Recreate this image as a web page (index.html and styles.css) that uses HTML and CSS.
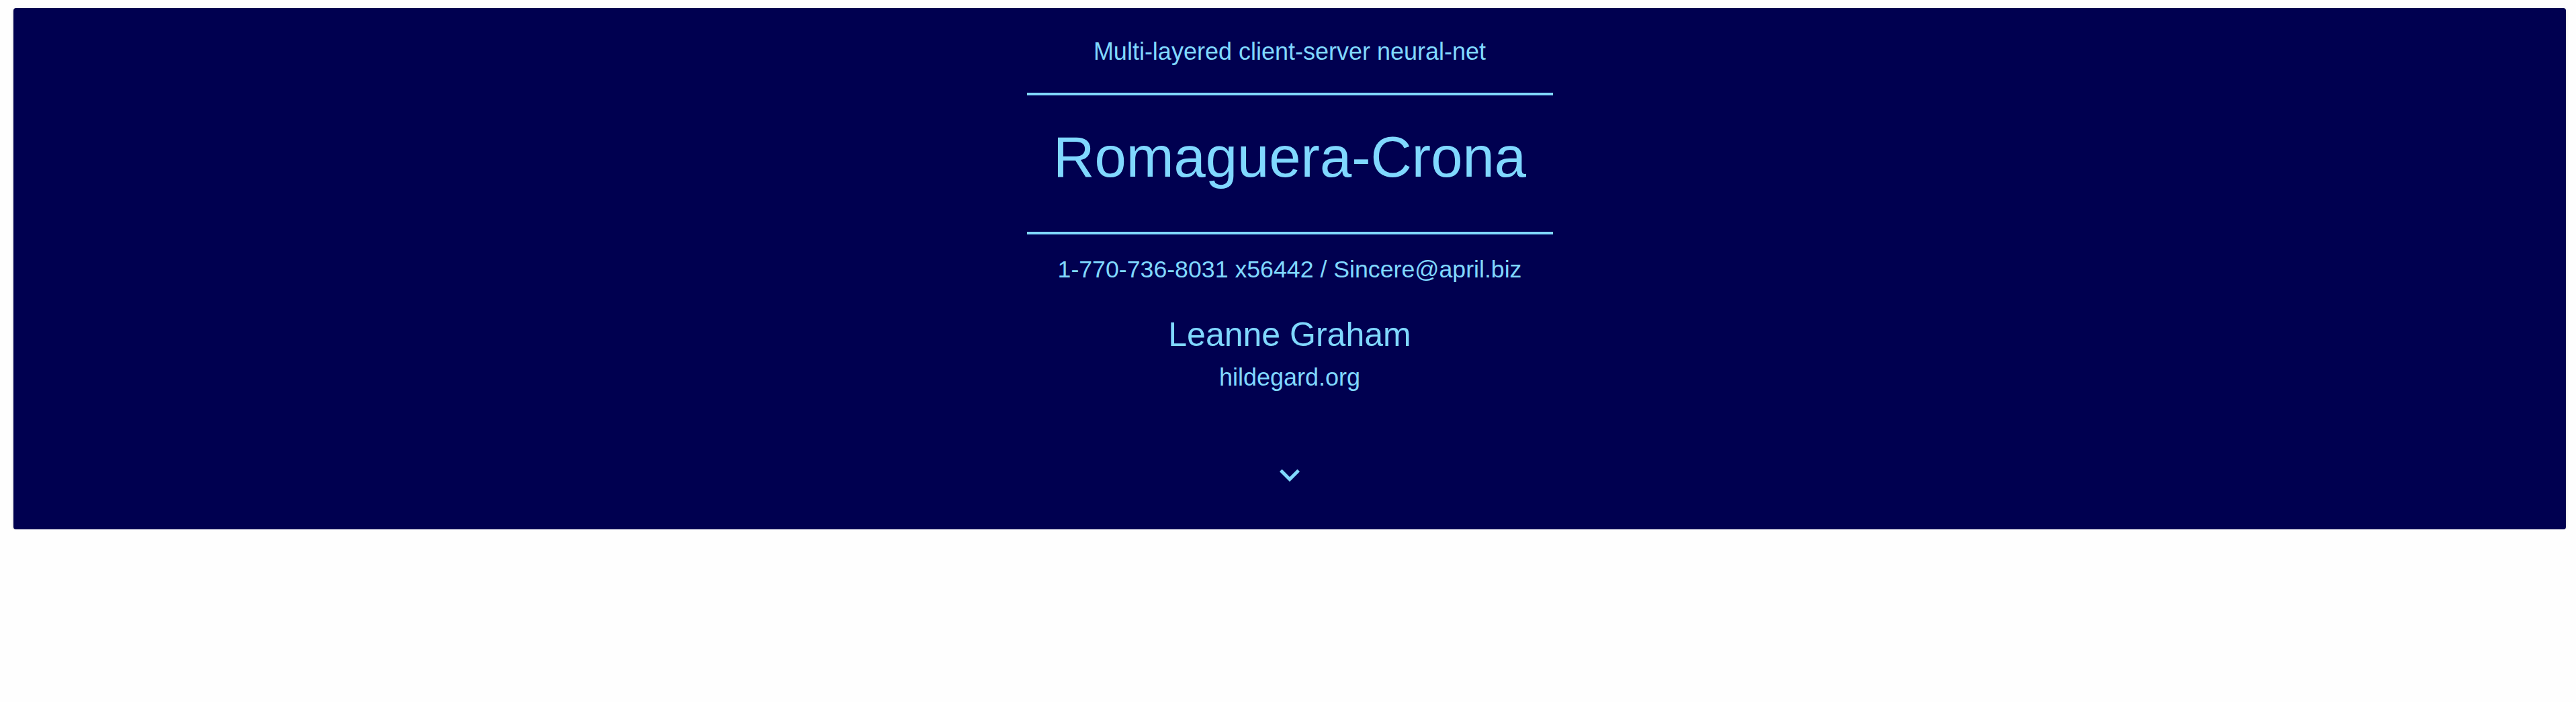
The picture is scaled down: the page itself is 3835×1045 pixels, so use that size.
FILE: index.html
```html
<!DOCTYPE html>
<html lang="en">
<head>
<meta charset="utf-8">
<title>Romaguera-Crona</title>
<link rel="stylesheet" href="styles.css">
</head>
<body>
  <main class="page">
    <section class="card">
      <p class="catch">Multi-layered client-server neural-net</p>
      <div class="rule rule-top"></div>
      <h1 class="company">Romaguera-Crona</h1>
      <div class="rule rule-bottom"></div>
      <p class="contact">1-770-736-8031 x56442 / Sincere@april.biz</p>
      <h2 class="person">Leanne Graham</h2>
      <p class="site">hildegard.org</p>
      <button class="expand" type="button" aria-label="Expand">
        <svg class="expand-icon" viewBox="0 0 24 24" width="60" height="60" aria-hidden="true">
          <path d="M16.59 8.59L12 13.17 7.41 8.59 6 10l6 6 6-6z" fill="currentColor"/>
        </svg>
      </button>
    </section>
  </main>
</body>
</html>
```

FILE: styles.css
```css
html, body {
  margin: 0;
  padding: 0;
  background: #fefefe;
}

body {
  font-family: "Liberation Sans", Arial, sans-serif;
  color: #80d8ff;
}

.page {
  padding: 12px 15px 0 20px;
}

.card {
  background: #000050;
  border-radius: 4px;
  box-shadow: 0 3px 1px -2px rgba(0, 0, 0, 0.2),
              0 2px 2px 0 rgba(0, 0, 0, 0.14),
              0 1px 5px 0 rgba(0, 0, 0, 0.12);
  display: flex;
  flex-direction: column;
  align-items: center;
  padding: 44px 0 51px;
  text-align: center;
}

.catch {
  margin: 0;
  font-size: 36px;
  line-height: 42px;
  font-weight: 400;
}

.rule {
  width: 783px;
  height: 4px;
  background: #80d8ff;
}

.rule-top {
  margin-top: 40px;
}

.company {
  margin: 42px 0 0;
  font-size: 85px;
  line-height: 100px;
  font-weight: 400;
}

.rule-bottom {
  margin-top: 61px;
}

.contact {
  margin: 31px 0 0;
  font-size: 35.7px;
  line-height: 42px;
}

.person {
  margin: 47px 0 0;
  font-size: 50px;
  line-height: 58px;
  font-weight: 400;
}

.site {
  margin: 14px 0 0;
  font-size: 36px;
  line-height: 42px;
}

.expand {
  margin-top: 94px;
  padding: 0;
  border: 0;
  background: transparent;
  color: #80d8ff;
  cursor: pointer;
  display: block;
  width: 60px;
  height: 60px;
}

.expand-icon {
  display: block;
  width: 60px;
  height: 60px;
}
```
